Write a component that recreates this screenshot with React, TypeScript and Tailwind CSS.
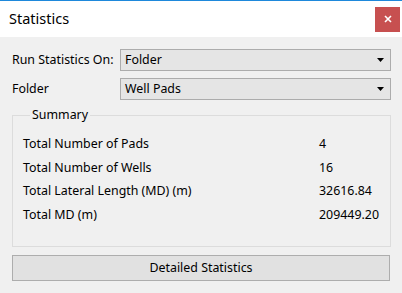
const rows = [
  { label: 'Total Number of Pads', value: '4' },
  { label: 'Total Number of Wells', value: '16' },
  { label: 'Total Lateral Length (MD) (m)', value: '32616.84' },
  { label: 'Total MD (m)', value: '209449.20' },
]

function Dropdown({ value }: { value: string }) {
  return (
    <div className="flex h-[22px] flex-1 items-center justify-between border border-[#acacac] bg-[#e5e5e5] pl-[4px] pr-[5px]">
      <span>{value}</span>
      <svg width="7" height="4" viewBox="0 0 7 4" className="mr-[1px]">
        <path d="M0 0h7L3.5 4z" fill="#000" />
      </svg>
    </div>
  )
}

export default function App() {
  return (
    <div
      className="flex h-[293px] w-[402px] flex-col bg-[#f0f0f0] text-[12.4px] text-black"
      style={{ fontFamily: '"Noto Sans", "Open Sans", sans-serif' }}
    >
      {/* Title bar */}
      <div className="flex h-[37px] items-center justify-between border-t border-[#1e88db] bg-white pl-[9px] pr-[2px]">
        <span className="text-[14.5px]">Statistics</span>
        <button className="flex h-[25px] w-[25px] items-center justify-center bg-[#c75050]">
          <svg width="8" height="8" viewBox="0 0 8 8">
            <path d="M1 1l6 6M7 1l-6 6" stroke="#fff" strokeWidth="1.6" />
          </svg>
        </button>
      </div>

      <div className="flex flex-1 flex-col pl-[12px] pr-[11px] pt-[12px]">
        <div className="flex flex-col gap-[7px]">
          <div className="flex items-center">
            <span className="w-[108px]">Run Statistics On:</span>
            <Dropdown value="Folder" />
          </div>
          <div className="flex items-center">
            <span className="w-[108px]">Folder</span>
            <Dropdown value="Well Pads" />
          </div>
        </div>

        {/* Summary group */}
        <fieldset className="mt-[7px] h-[140px] border border-[#dcdcdc] px-[10px]">
          <legend className="ml-[7px] px-[2px] leading-[16px]">Summary</legend>
          <div className="mt-[10px] flex flex-col">
            {rows.map((r) => (
              <div key={r.label} className="flex h-[23.4px] items-center">
                <span className="w-[296px]">{r.label}</span>
                <span>{r.value}</span>
              </div>
            ))}
          </div>
        </fieldset>

        <button className="mt-[8px] mr-[1px] h-[26px] border border-[#adadad] bg-[#e1e1e1] text-center">
          Detailed Statistics
        </button>
      </div>
    </div>
  )
}
